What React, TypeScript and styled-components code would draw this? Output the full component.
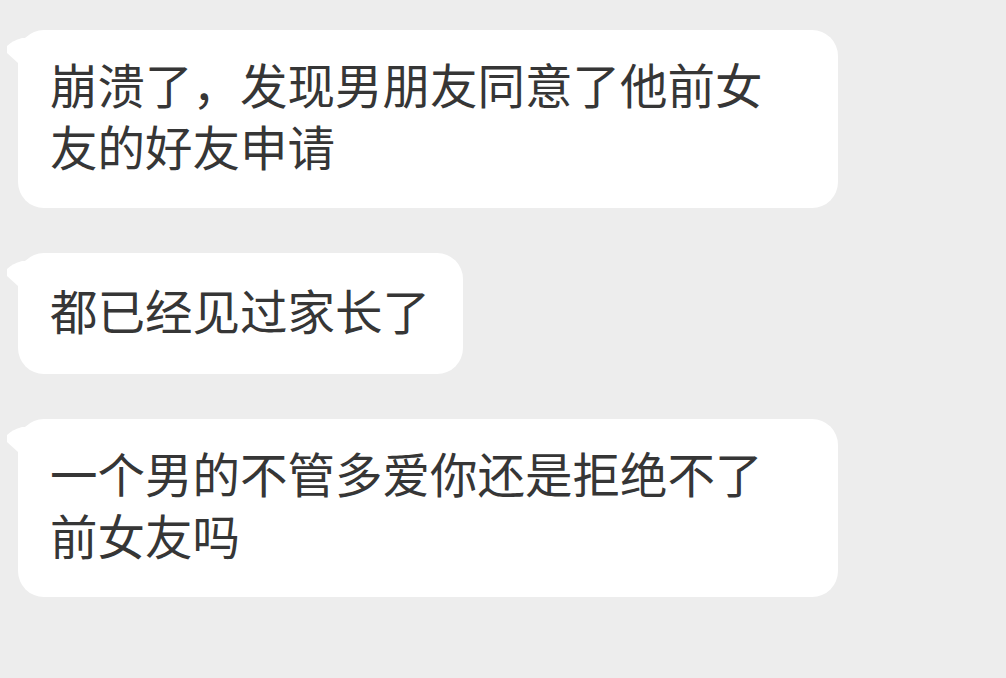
import React from 'react';
import styled, { createGlobalStyle } from 'styled-components';

const GlobalStyle = createGlobalStyle`
    html, body {
        margin: 0;
        padding: 0;
        background: #ededed;
    }
    body {
        font-family: 'Noto Sans CJK SC', 'Noto Sans', sans-serif;
    }
`;

const messages: string[] = [
    '崩溃了，发现男朋友同意了他前女友的好友申请',
    '都已经见过家长了',
    '一个男的不管多爱你还是拒绝不了前女友吗',
];

const Page = styled.div`
    width: 1006px;
    height: 678px;
    box-sizing: border-box;
    padding: 30px 0 0 18px;
    display: flex;
    flex-direction: column;
    align-items: flex-start;
    gap: 45px;
    overflow: hidden;
`;

const Bubble = styled.div`
    position: relative;
    box-sizing: border-box;
    max-width: 820px;
    min-height: 121px;
    padding: 23px 33px 31px 32px;
    display: flex;
    align-items: center;
    background: #ffffff;
    border-radius: 26px;
`;

const Text = styled.p`
    margin: 0;
    font-size: 47.5px;
    font-weight: 400;
    line-height: 62px;
    color: #363636;
    word-break: break-all;
`;

const Tail = styled.svg`
    position: absolute;
    left: -12px;
    top: 8px;
    width: 26px;
    height: 32px;
`;

const BubbleTail = () => (
    <Tail viewBox="0 0 26 32">
        <path d="M1 8 Q8 1 21 -1 L26 32 L12 25 L1 15 Z" fill="#ffffff" />
    </Tail>
);

export default function App() {
    return (
        <>
            <GlobalStyle />
            <Page>
                {messages.map((msg) => (
                    <Bubble key={msg}>
                        <BubbleTail />
                        <Text>{msg}</Text>
                    </Bubble>
                ))}
            </Page>
        </>
    );
}
